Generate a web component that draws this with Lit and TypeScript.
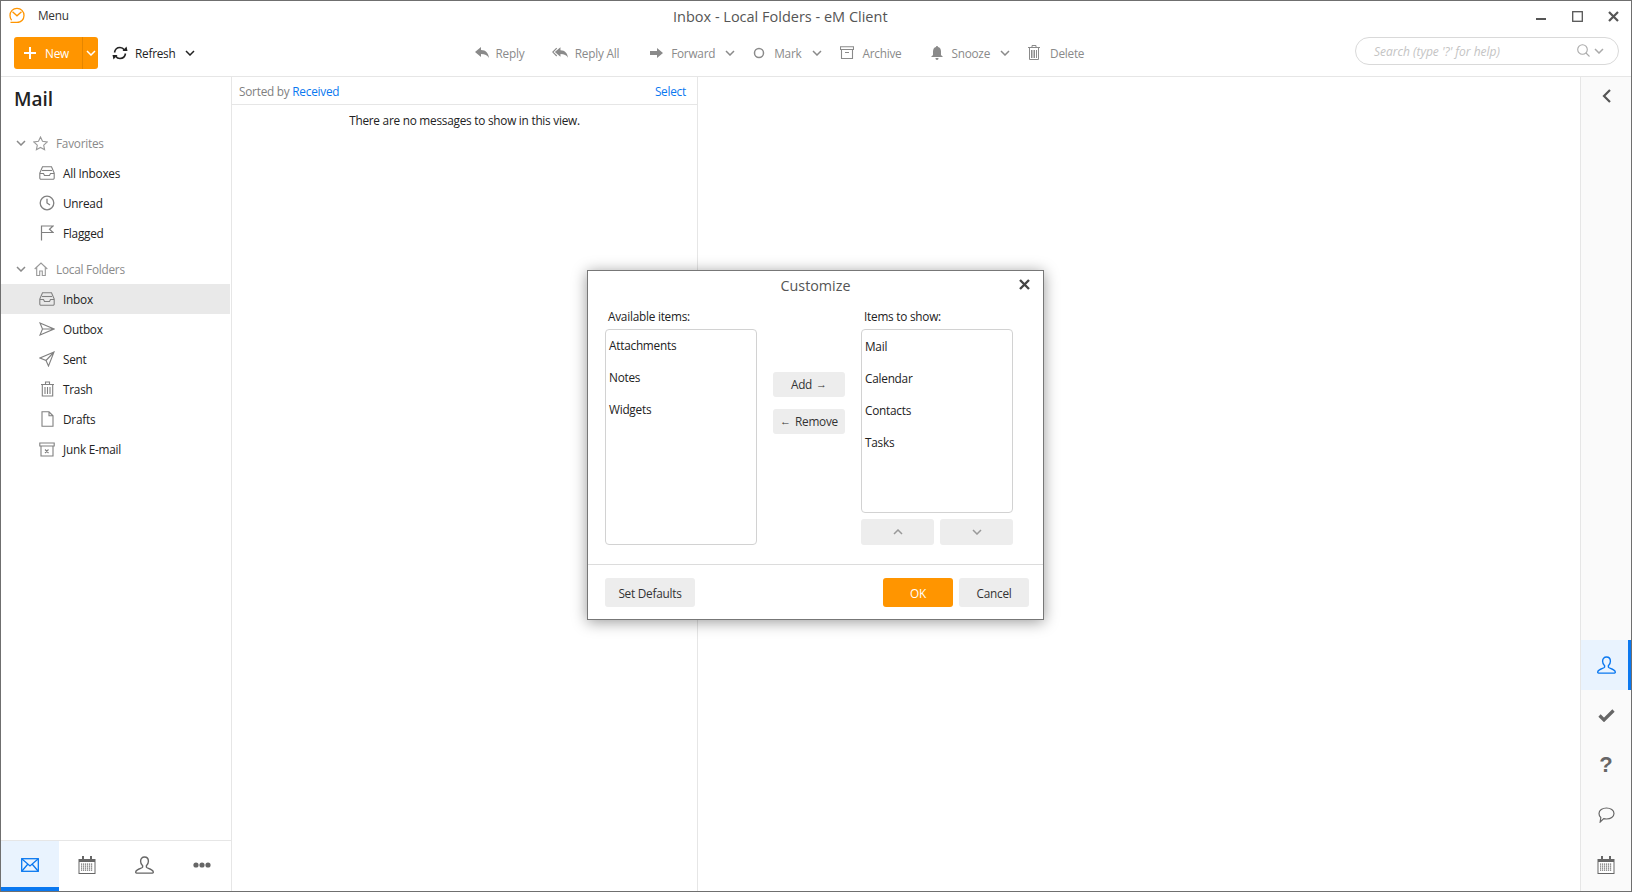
import { LitElement, html, css, svg } from "lit";
import { customElement } from "lit/decorators.js";

const ic = (w: number, h: number, body: unknown, cls = "") =>
  html`<svg class="ic ${cls}" width=${w} height=${h} viewBox="0 0 ${w} ${h}" fill="none" stroke="currentColor" stroke-width="1.1">${body}</svg>`;

const chev = (cls = "") =>
  html`<svg class="ic ${cls}" width="10" height="6" viewBox="0 0 10 6" fill="none" stroke="currentColor" stroke-width="1.5"><path d="M1 1l4 4 4-4"/></svg>`;

const inbox = ic(16, 14, svg`<path d="M3.5 .8h9l2.7 6.2v5a1.2 1.2 0 0 1-1.2 1.2H2a1.2 1.2 0 0 1-1.2-1.2V7z"/><path d="M1 7.5h3.5l1 2h5l1-2H15"/><path d="M3 4.5h10"/>`);
const clock = ic(16, 16, svg`<circle cx="8" cy="8" r="6.8" stroke-width="1.3"/><path d="M8 3.8V8l3 2" stroke-width="1.3"/>`);
const flag = ic(14, 16, svg`<path d="M1.5 15.5V1h11.5L9.5 4.2 13 7.5H1.5" stroke-width="1.2"/>`);
const outbox = ic(16, 14, svg`<path d="M1 1l14 6-14 6 2.5-6zM3.5 7H15" />`);
const sent = ic(16, 16, svg`<path d="M15 1L1 7l6 2.5L9.5 15zM15 1L7 9.5" />`);
const trash = ic(15, 16, svg`<path d="M1 3.5h13M5.5 3.5V1h4v2.5M2.3 3.5V15h10.4V3.5M5 6v7M7.5 6v7M10 6v7" />`);
const draft = ic(13, 16, svg`<path d="M1 .8h7l4 4v10.4H1zM8 .8v4h4" />`);
const junk = ic(16, 15, svg`<path d="M.8 1h14.4v3H.8zM2 4v10h12V4M6 7.5l3.5 3.5M9.5 7.5L6 11" />`);
const star = ic(15, 15, svg`<path d="M7.500 1l2 4.300 4.700.6-3.500 3.200.9 4.700-4.100-2.300-4.100 2.300.9-4.700L.8 5.900l4.700-.6z"/>`);
const home = ic(14, 14, svg`<path d="M.7 7L7 1l6.300 6M2.700 5.500v8h3v-4.500h2.600v4.500h3v-8"/>`);

const calendar = (c: string) => html`<svg class="ic ${c}" width="18" height="18" viewBox="0 0 18 18" fill="currentColor">
  <path d="M4 0h2v3h6V0h2v3h3.500v15H.5V3H4z"/><rect x="1.500" y="6" width="15" height="11" fill="#fff"/>
  <g fill="currentColor">${[7.5, 9.5, 11.5, 13.5].map((y) => [3, 5, 7, 9, 11, 13].map((x) => svg`<rect x=${x} y=${y} width="1.200" height="1.200"/>`))}</g></svg>`;

const person = (c: string) => html`<svg class="ic ${c}" width="19" height="18" viewBox="0 0 19 18" fill="none" stroke="currentColor" stroke-width="1.400">
  <path d="M9.500 1c2.400 0 3.900 1.800 3.900 4.300 0 2-.9 3.500-2 4.400v1.600c0 .9 5.800 1.700 6.800 4.200.3.700 0 1.600-.8 1.600H1.600c-.8 0-1.100-.9-.8-1.600 1-2.500 6.800-3.300 6.800-4.200V9.700c-1.100-.9-2-2.400-2-4.400C5.600 2.800 7.100 1 9.500 1z"/></svg>`;

interface Act { icon: unknown; label: string; caret?: boolean; cls: string }
const actions: Act[] = [
  { icon: html`<svg width="14" height="12" viewBox="0 0 14 12" fill="currentColor"><path d="M0 5l6-5v3c5 0 7.500 3.500 8 8-1.500-2.800-4-4-8-4v3z"/></svg>`, label: "Reply", cls: "a1" },
  { icon: html`<svg width="16" height="12" viewBox="0 0 17 12"><path fill="currentColor" d="M3 5l6-5v3c5 0 7.500 3.500 8 8-1.500-2.800-4-4-8-4v3z"/><path fill="none" stroke="currentColor" stroke-width="1.200" d="M5 .8L.9 5 5 9.200"/></svg>`, label: "Reply All", cls: "a2" },
  { icon: html`<svg width="13" height="10" viewBox="0 0 13 10" fill="currentColor"><path d="M0 3h7V0l6 5-6 5V7H0z"/></svg>`, label: "Forward", caret: true, cls: "a3" },
  { icon: html`<svg width="12" height="12" viewBox="0 0 12 12" fill="none" stroke="currentColor" stroke-width="1.500"><circle cx="6" cy="6" r="4.500"/></svg>`, label: "Mark", caret: true, cls: "a4" },
  { icon: html`<svg width="14" height="13" viewBox="0 0 14 13" fill="none" stroke="currentColor" stroke-width="1.100"><path d="M.5 .8h13v2.700H.5zM1.500 3.500v9h11v-9M5 6.500h4"/></svg>`, label: "Archive", cls: "a5" },
  { icon: html`<svg width="12" height="14" viewBox="0 0 12 14" fill="currentColor"><path d="M6 0c.7 0 1 .5 1 1 2 .5 3 2.200 3 4.500V9l2 2H0l2-2V5.500C2 3.200 3 1.500 5 1c0-.5.300-1 1-1zM4.500 12h3C7.500 13 7 14 6 14s-1.500-1-1.500-2z"/></svg>`, label: "Snooze", caret: true, cls: "a6" },
  { icon: html`<svg width="12" height="15" viewBox="0 0 12 15" fill="none" stroke="currentColor" stroke-width="1"><path d="M0 2.500h12M4 2.500V.5h4v2M1.500 2.500v12h9v-12M3.500 5v8M5 5v8M6.500 5v8M8.500 5v8"/></svg>`, label: "Delete", cls: "a7" },
];

@customElement("app-root")
export class AppRoot extends LitElement {
  static styles = css`
    :host { display: block; font-family: "Open Sans", "Noto Sans", sans-serif; font-size: 11.800px; letter-spacing: -0.24px; color: #222; }
    * { box-sizing: border-box; }
    .ic { display: block; flex: none; }
    .window { position: relative; display: flex; flex-direction: column; height: 100vh; border: 1px solid #6f6f6f; background: #fff; overflow: hidden; }
    .titlebar { display: grid; grid-template-columns: 672px auto 1fr; align-items: center; height: 30px; flex: none; }
    .brand { display: flex; align-items: center; gap: 13px; padding: 0 0 2px 8px; color: #333; }
    .brand svg { color: #ff9500; }
    .title { font-size: 14.500px; letter-spacing: 0; color: #555; }
    .winbtns { display: flex; justify-content: flex-end; align-items: center; gap: 25px; padding-right: 12px; color: #555; }
    .toolbar { position: relative; display: flex; align-items: center; height: 46px; flex: none; border-bottom: 1px solid #e6e6e6; padding-left: 13px; }
    .new { display: flex; height: 32px; width: 84px; background: #ff9500; border-radius: 3px; color: #fff; align-items: center; margin-top: -2px; }
    .new .main { flex: 1; display: flex; align-items: center; gap: 9px; padding-left: 10px; border-right: 1px solid #e58600; height: 100%; }
    .new .main span { padding-top: 1px; }
    .new .drop { width: 15px; display: flex; justify-content: center; }
    .refresh { display: flex; align-items: center; gap: 7px; margin-left: 14px; color: #222; margin-top: -1px; }
    .refresh .ic:first-child { margin-bottom: 1px; }
    .refresh .ic:last-child { margin-left: 2px; color: #222; margin-bottom: 1px; }
    .actions { display: flex; align-items: center; margin-left: 280px; margin-top: -2px; color: #8a8a8a; }
    .act { display: flex; align-items: center; gap: 7px; }
    .act svg { display: block; flex: none; }
    .a2 { margin-left: 27.500px; } .a3 { margin-left: 31px; gap: 8px; } .a4 { margin-left: 18px; gap: 9px; } .a5 { margin-left: 18px; gap: 8px; }
    .a6 { margin-left: 30px; gap: 8px; } .a7 { margin-left: 18px; gap: 10px; }
    .caret { margin-left: 2px; }
    .search { margin-left: auto; margin-right: 12px; margin-top: -6px; width: 264px; height: 28px; border: 1px solid #d9d9d9; border-radius: 14px; display: flex; align-items: center; padding: 0 14px 0 18px; color: #c4c4c4; font-style: italic; font-size: 12px; letter-spacing: 0; }
    .search .ph { flex: 1; padding-top: 2px; }
    .search .ic { color: #aaa; }
    .search .ic + .ic { margin-left: 4px; }
    .main-area { flex: 1; display: flex; min-height: 0; }
    .sidebar { width: 231px; flex: none; border-right: 1px solid #e6e6e6; display: flex; flex-direction: column; }
    .head { font-size: 19px; letter-spacing: 0; font-weight: 600; padding: 9px 0 0 13px; height: 51px; color: #222; }
    .tree { flex: 1; }
    .group { display: flex; align-items: center; height: 30px; color: #8a8a8a; padding-left: 15px; }
    .group .chev { margin-right: 7px; }
    .group .glyph { margin-right: 8px; width: 15px; display: flex; justify-content: center; color: #999; }
    .gap { height: 6px; }
    .row { display: flex; align-items: center; height: 30px; padding-left: 34px; color: #222; }
    .row .cell { width: 24px; display: flex; justify-content: center; color: #808080; flex: none; margin-right: 4px; }
    .row.sel { background: #e9e9e9; margin-right: 1px; }
    .bottom { height: 51px; flex: none; border-top: 1px solid #e6e6e6; display: flex; }
    .tab { width: 58px; display: flex; align-items: center; justify-content: center; color: #666; padding-bottom: 2px; }
    .tab.on { background: #e9f3fe; color: #0a78f0; border-bottom: 4px solid #0a78f0; padding: 1px 0 0; }
    .list { width: 466px; flex: none; border-right: 1px solid #e6e6e6; }
    .sortbar { height: 28px; border-bottom: 1px solid #e6e6e6; display: flex; align-items: center; justify-content: space-between; padding: 1px 11px 0 7px; color: #808080; }
    .blue { color: #0a78f0; }
    .empty { text-align: center; padding-top: 7px; color: #222; }
    .reading { flex: 1; }
    .rail { width: 51px; flex: none; border-left: 1px solid #e6e6e6; display: flex; flex-direction: column; align-items: stretch; background: #fafafa; padding-bottom: 1px; }
    .rail .top { height: 38px; display: flex; align-items: center; justify-content: center; color: #555; }
    .rail .space { flex: 1; }
    .rail .it { height: 50px; flex: none; display: flex; align-items: center; justify-content: center; color: #666; }
    .rail .it.on { background: #e9f3fe; color: #0a78f0; border-right: 3px solid #0a78f0; padding-left: 3px; }
    .qm { font: 700 22px "Liberation Sans", sans-serif; letter-spacing: 0; }
    .dialog { position: absolute; left: 586px; top: 269px; width: 457px; height: 350px; background: #fff; border: 1px solid #777; box-shadow: 0 2px 14px rgba(0,0,0,.4); display: flex; flex-direction: column; }
    .dtitle { position: relative; height: 32px; display: flex; align-items: center; justify-content: center; font-size: 14.300px; letter-spacing: 0; color: #555; flex: none; padding-bottom: 4px; }
    .dclose { position: absolute; right: 13px; top: 8px; color: #444; }
    .dbody { flex: 1; display: grid; grid-template-columns: 152px 104px 152px; column-gap: 0; padding: 0 0 0 17px; }
    .col { display: flex; flex-direction: column; }
    .lab { height: 26px; padding: 5px 0 0 3px; color: #222; }
    .box { border: 1px solid #d2d2d2; border-radius: 4px; flex: none; padding-top: 2px; }
    .box.l { height: 216px; }
    .box.r { height: 184px; }
    .box div { height: 32px; padding: 5px 0 0 3px; }
    .box.r div { padding-top: 6px; }
    .mid { display: flex; flex-direction: column; align-items: center; gap: 12px; padding-top: 69px; }
    .btn { background: #ededed; border-radius: 3px; display: flex; align-items: center; justify-content: center; gap: 4px; color: #333; }
    .btn.sm { width: 72px; height: 25px; padding-bottom: 2px; }
    .arr { font: 11px "Liberation Sans", sans-serif; letter-spacing: 0; }
    .arrows { display: flex; gap: 6px; margin-top: 6px; }
    .arrows .btn { flex: 1; height: 26px; color: #999; }
    .dfoot { height: 55px; flex: none; border-top: 1px solid #dcdcdc; display: flex; align-items: center; padding: 1px 14px 0 17px; gap: 6px; }
    .dfoot .btn { height: 29px; width: 70px; }
    .dfoot .def { width: 90px; margin-right: auto; }
    .dfoot .ok { background: #ff9500; color: #fff; }
  `;

  render() {
    return html`<div class="window">
      <div class="titlebar">
        <div class="brand">
          <svg class="ic" width="16" height="16" viewBox="0 0 16 16" fill="none" stroke="currentColor" stroke-width="1.300"><path d="M2.600 13.200C1.500 12 1 10.400 1 8.500 1 4.400 4 1.300 8 1.300s7 3.100 7 7.200-3 7-7 7H1.500"/><path d="M3.500 4.800L8 8.800l4.500-4"/></svg>
          <span>Menu</span>
        </div>
        <div class="title">Inbox - Local Folders - eM Client</div>
        <div class="winbtns">
          <svg class="ic" width="11" height="11" viewBox="0 0 11 11" fill="currentColor"><rect y="7" width="10" height="2"/></svg>
          <svg class="ic" width="11" height="11" viewBox="0 0 11 11" fill="none" stroke="currentColor" stroke-width="1.300"><rect x=".7" y=".7" width="9.600" height="9.600"/></svg>
          <svg class="ic" width="11" height="11" viewBox="0 0 11 11" fill="none" stroke="currentColor" stroke-width="2.200"><path d="M1 1l9 9M10 1l-9 9"/></svg>
        </div>
      </div>
      <div class="toolbar">
        <div class="new">
          <div class="main"><svg class="ic" width="12" height="12" viewBox="0 0 12 12" fill="none" stroke="#fff" stroke-width="2"><path d="M6 0v12M0 6h12"/></svg><span>New</span></div>
          <div class="drop">${chev()}</div>
        </div>
        <div class="refresh">
          <svg class="ic" width="16" height="14" viewBox="0 0 16 14" fill="none" stroke="#222" stroke-width="1.600"><path d="M2.500 6.500C3 3.500 5.200 1.500 8 1.500c1.800 0 3.300.8 4.300 2.200M13.500 7.500c-.5 3-2.700 5-5.500 5-1.800 0-3.300-.8-4.300-2.200"/><path fill="#222" stroke="none" d="M10.500 5l5 0-1-4.500zM5.500 9l-5 0 1 4.500z"/></svg>
          <span>Refresh</span>
          ${chev()}
        </div>
        <div class="actions">
          ${actions.map((a) => html`<div class="act ${a.cls}">${a.icon}<span>${a.label}</span>${a.caret ? chev("caret") : ""}</div>`)}
        </div>
        <div class="search">
          <span class="ph">Search (type '?' for help)</span>
          <svg class="ic" width="13" height="13" viewBox="0 0 13 13" fill="none" stroke="currentColor" stroke-width="1.100"><circle cx="5.500" cy="5.500" r="4.800"/><path d="M9 9l3.500 3.500"/></svg>
          ${chev()}
        </div>
      </div>
      <div class="main-area">
        <div class="sidebar">
          <div class="head">Mail</div>
          <div class="tree">
            <div class="group">${chev("chev")}<span class="glyph">${star}</span>Favorites</div>
            ${this.row(inbox, "All Inboxes")}
            ${this.row(clock, "Unread")}
            ${this.row(flag, "Flagged")}
            <div class="gap"></div>
            <div class="group">${chev("chev")}<span class="glyph">${home}</span>Local Folders</div>
            ${this.row(inbox, "Inbox", true)}
            ${this.row(outbox, "Outbox")}
            ${this.row(sent, "Sent")}
            ${this.row(trash, "Trash")}
            ${this.row(draft, "Drafts")}
            ${this.row(junk, "Junk E-mail")}
          </div>
          <div class="bottom">
            <div class="tab on"><svg class="ic" width="18" height="14" viewBox="0 0 18 14" fill="none" stroke="currentColor" stroke-width="1.300"><rect x=".7" y=".7" width="16.600" height="12.600"/><path d="M1 1l8 7 8-7M1 13l5.500-6.500M17 13l-5.500-6.500"/></svg></div>
            <div class="tab">${calendar("")}</div>
            <div class="tab">${person("")}</div>
            <div class="tab"><svg class="ic" width="18" height="6" viewBox="0 0 18 6" fill="currentColor"><circle cx="3" cy="3" r="2.600"/><circle cx="9" cy="3" r="2.600"/><circle cx="15" cy="3" r="2.600"/></svg></div>
          </div>
        </div>
        <div class="list">
          <div class="sortbar"><span>Sorted by <span class="blue">Received</span></span><span class="blue">Select</span></div>
          <div class="empty">There are no messages to show in this view.</div>
        </div>
        <div class="reading"></div>
        <div class="rail">
          <div class="top"><svg class="ic" width="9" height="14" viewBox="0 0 9 14" fill="none" stroke="currentColor" stroke-width="2.200"><path d="M8 1L2 7l6 6"/></svg></div>
          <div class="space"></div>
          <div class="it on">${person("")}</div>
          <div class="it"><svg class="ic" width="17" height="13" viewBox="0 0 17 13" fill="none" stroke="currentColor" stroke-width="3.200"><path d="M1.500 6.500L6 11 15.500 1.500"/></svg></div>
          <div class="it"><span class="qm">?</span></div>
          <div class="it"><svg class="ic" width="17" height="16" viewBox="0 0 17 16" fill="none" stroke="currentColor" stroke-width="1.200"><path d="M8.500 1C12.600 1 16 3.300 16 6.500S12.600 12 8.500 12c-1 0-2-.2-2.800-.4L2.200 15l.6-4.500C1.700 9.500 1 8.100 1 6.500 1 3.300 4.400 1 8.500 1z"/></svg></div>
          <div class="it">${calendar("")}</div>
        </div>
      </div>
      <div class="dialog">
        <div class="dtitle">Customize
          <svg class="ic dclose" width="11" height="11" viewBox="0 0 11 11" fill="none" stroke="currentColor" stroke-width="2.400"><path d="M1 1l9 9M10 1l-9 9"/></svg>
        </div>
        <div class="dbody">
          <div class="col">
            <div class="lab">Available items:</div>
            <div class="box l">
              <div>Attachments</div><div>Notes</div><div>Widgets</div>
            </div>
          </div>
          <div class="mid">
            <div class="btn sm"><span>Add</span><span class="arr">→</span></div>
            <div class="btn sm"><span class="arr">←</span><span>Remove</span></div>
          </div>
          <div class="col">
            <div class="lab">Items to show:</div>
            <div class="box r">
              <div>Mail</div><div>Calendar</div><div>Contacts</div><div>Tasks</div>
            </div>
            <div class="arrows">
              <div class="btn"><svg class="ic" width="10" height="6" viewBox="0 0 10 6" fill="none" stroke="currentColor" stroke-width="1.500"><path d="M1 5l4-4 4 4"/></svg></div>
              <div class="btn">${chev()}</div>
            </div>
          </div>
        </div>
        <div class="dfoot">
          <div class="btn def">Set Defaults</div>
          <div class="btn ok">OK</div>
          <div class="btn">Cancel</div>
        </div>
      </div>
    </div>`;
  }

  row(icon: unknown, label: string, sel = false) {
    return html`<div class="row ${sel ? "sel" : ""}"><span class="cell">${icon}</span><span>${label}</span></div>`;
  }
}
